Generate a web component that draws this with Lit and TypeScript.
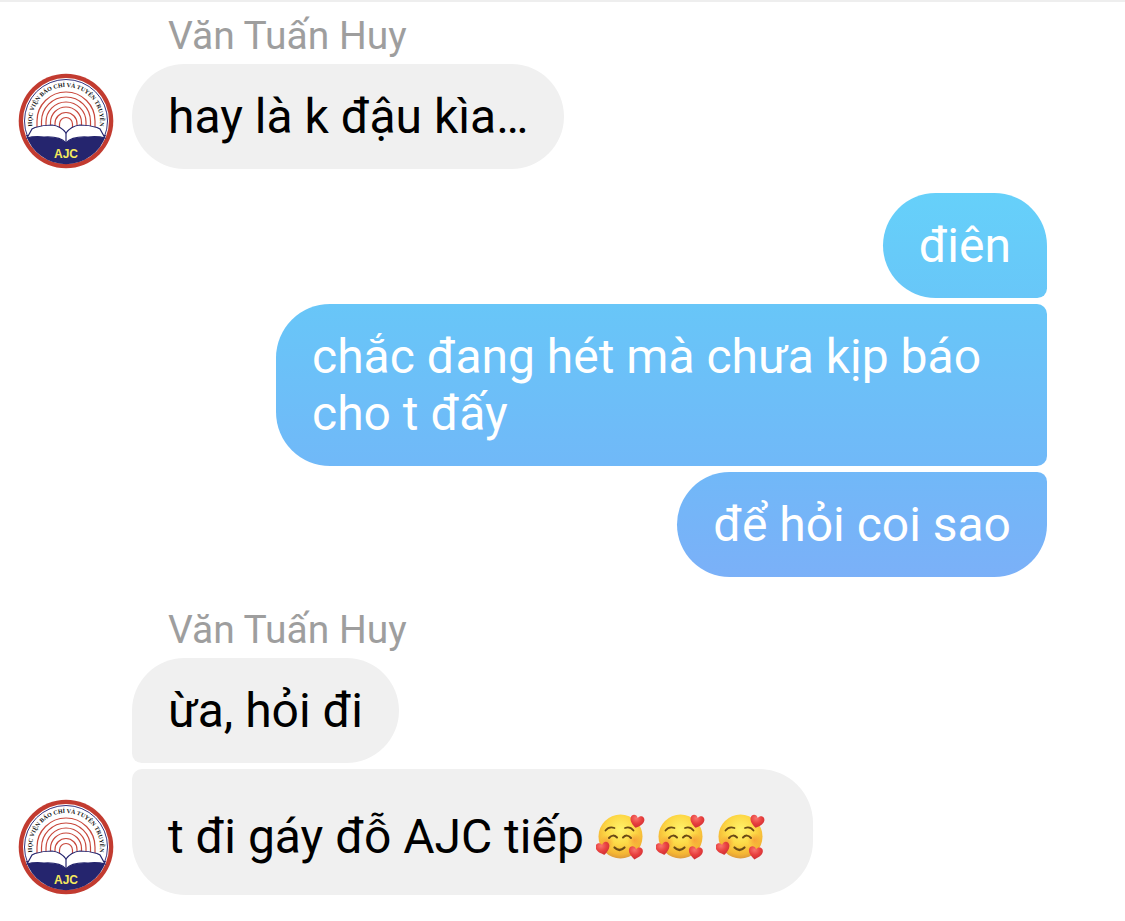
import { LitElement, html, css, svg } from "lit";
import { customElement, property } from "lit/decorators.js";

interface Message {
  text: string;
  hearts?: number;
}

interface MessageGroup {
  sender?: string;
  messages: Message[];
}

/* Sunrise lines behind the book: radius and centre height of each arch. */
const ARCHES: [number, number][] = [
  [29, 48],
  [24.5, 48.5],
  [20, 49],
  [15.5, 49.5],
  [11, 50.5],
  [6.5, 51],
];

@customElement("school-avatar")
class SchoolAvatar extends LitElement {
  static styles = css`
    :host {
      display: block;
      width: 96px;
      height: 96px;
      flex: none;
    }
    .logo {
      display: block;
      width: 100%;
      height: 100%;
    }
    .ring-text {
      font: bold 6px "Liberation Serif", serif;
      fill: #111;
      text-anchor: middle;
    }
    .initials {
      font: bold 12px "Liberation Sans", Arial, sans-serif;
      fill: #f6ea5c;
      text-anchor: middle;
    }
  `;

  render() {
    return html`
      <svg class="logo" viewBox="0 0 96 96" role="img" aria-label="AJC">
        <defs>
          <path id="arc" d="M18 64A34 34 0 1 1 78 64" />
        </defs>
        <circle cx="48" cy="48" r="47.300" fill="#c23b30" />
        <circle cx="48" cy="48" r="43" fill="#fff" />
        <circle cx="48" cy="48" r="41.500" fill="#fff" stroke="#34347e" stroke-width="1" />
        <g fill="none" stroke="#c8483c" stroke-width="1.200">
          ${ARCHES.map(
            ([r, cy]) => svg`<path d="M${48 - r} 62V${cy}A${r} ${r} 0 0 1 ${48 + r} ${cy}V62" />`
          )}
        </g>
        <path d="M8 62H88A42 42 0 0 1 8 62Z" fill="#25256e" />
        <path
          d="M9 65L14 56L17 54.500Q25 52 34 52Q43 53 48 60Q53 53 62 52Q71 52 79 54.500L82 56L87 65Q80 63 70 64Q54 63 48 70Q42 63 26 64Q16 63 9 65Z"
          fill="#fff"
          stroke="#25256e"
          stroke-width="1.200"
        />
        <path d="M48 60V70" stroke="#25256e" stroke-width="1.200" />
        <text class="ring-text">
          <textPath href="#arc" startOffset="50%">HỌC VIỆN BÁO CHÍ VÀ TUYÊN TRUYỀN</textPath>
        </text>
        <text class="initials" x="48" y="85">AJC</text>
      </svg>
    `;
  }
}

@customElement("heart-face")
class HeartFace extends LitElement {
  static styles = css`
    :host {
      display: block;
      width: 50px;
      height: 50px;
    }
    .face {
      display: block;
      width: 100%;
      height: 100%;
    }
  `;

  render() {
    return html`
      <svg class="face" viewBox="0 0 50 50" role="img" aria-label="🥰">
        <defs>
          <radialGradient id="skin" cx="0.5" cy="0.35" r="0.65">
            <stop offset="0" stop-color="#fff36b" />
            <stop offset="0.5" stop-color="#fdd947" />
            <stop offset="0.85" stop-color="#f4b534" />
            <stop offset="1" stop-color="#dd9a3c" />
          </radialGradient>
          <radialGradient id="blush">
            <stop offset="0" stop-color="#f58a33" stop-opacity="0.6" />
            <stop offset="1" stop-color="#f58a33" stop-opacity="0" />
          </radialGradient>
          <radialGradient id="red" cx="0.4" cy="0.25" r="0.8">
            <stop offset="0" stop-color="#f8736d" />
            <stop offset="0.5" stop-color="#e8403f" />
            <stop offset="1" stop-color="#c92b33" />
          </radialGradient>
          <path
            id="heart"
            d="M0 6.5C-3 4.5 -7 1.5 -7 -2.2C-7 -6.8 -1.6 -7.4 0 -3.5C1.6 -7.4 7 -6.8 7 -2.2C7 1.5 3 4.5 0 6.5Z"
            fill="url(#red)"
          />
        </defs>
        <circle cx="24.500" cy="24.500" r="22" fill="url(#skin)" />
        <circle cx="11" cy="30" r="7" fill="url(#blush)" />
        <circle cx="38.500" cy="28" r="7" fill="url(#blush)" />
        <g fill="none" stroke="#6b4a16" stroke-linecap="round">
          <path d="M9.500 18.500Q13 14 18.500 16" stroke-width="1.800" />
          <path d="M29 16Q34 14 37.500 18.500" stroke-width="1.800" />
          <path d="M13 26Q17 21.500 21 25.500" stroke-width="2" />
          <path d="M27 25.500Q31 21.500 35 26" stroke-width="2" />
          <path d="M18.500 35.500Q23.500 40.500 28.500 35.500" stroke-width="2.200" />
        </g>
        <use href="#heart" transform="translate(41 9.500) rotate(12)" />
        <use href="#heart" transform="translate(7 36.500) rotate(-14)" />
        <use href="#heart" transform="translate(39.500 41) rotate(10)" />
      </svg>
    `;
  }
}

@customElement("message-group")
class MessageGroupView extends LitElement {
  @property({ attribute: false }) group: MessageGroup = { messages: [] };

  static styles = css`
    :host {
      display: block;
    }
    .row {
      display: flex;
      align-items: flex-end;
      gap: 18px;
      padding: 0 78px 0 18px;
    }
    .stack {
      display: flex;
      flex-direction: column;
      flex: 1;
      min-width: 0;
      gap: 6px;
      align-items: flex-start;
    }
    .outgoing .stack {
      align-items: flex-end;
    }
    .sender {
      margin: 0 0 0 132px;
      padding: 6px 36px 5px;
      font-size: 39px;
      font-weight: 400;
      line-height: 46px;
      color: #9e9e9e;
    }
    .bubble {
      box-sizing: border-box;
      max-width: 771px;
      margin: 0;
      padding: 24px 36px;
      border-radius: 54px;
      background: #f0f0f0;
      color: #000;
      font-size: 48px;
      line-height: 57px;
      overflow-wrap: anywhere;
    }
    .outgoing .bubble {
      background: linear-gradient(#62e2fd, #68c6f8 33%, #70b9f8 50%, #7bb0f8 63%, #9290f5) fixed;
      color: #fff;
    }
    .incoming .bubble:not(:last-child) {
      border-bottom-left-radius: 10px;
    }
    .incoming .bubble:not(:first-child) {
      border-top-left-radius: 10px;
    }
    .outgoing .bubble:not(:last-child) {
      border-bottom-right-radius: 10px;
    }
    .outgoing .bubble:not(:first-child) {
      border-top-right-radius: 10px;
    }
    .with-hearts {
      display: flex;
      align-items: center;
      gap: 12px;
      padding-block: 39px 30px;
    }
    .hearts {
      display: flex;
      gap: 10px;
      padding-right: 11px;
    }
  `;

  render() {
    const { sender, messages } = this.group;
    return html`
      ${sender ? html`<h2 class="sender">${sender}</h2>` : null}
      <div class="row ${sender ? "incoming" : "outgoing"}">
        ${sender ? html`<school-avatar></school-avatar>` : null}
        <div class="stack">
          ${messages.map((message) =>
            message.hearts
              ? html`<div class="bubble with-hearts">
                  <span>${message.text}</span>
                  <span class="hearts">
                    ${Array.from({ length: message.hearts }, () => html`<heart-face></heart-face>`)}
                  </span>
                </div>`
              : html`<p class="bubble">${message.text}</p>`
          )}
        </div>
      </div>
    `;
  }
}

@customElement("app-root")
class AppRoot extends LitElement {
  static styles = css`
    :host {
      display: block;
      font-family: Roboto, "Noto Sans", sans-serif;
      background: #fff;
    }
    .thread {
      display: flex;
      flex-direction: column;
      gap: 24px;
      min-height: 100vh;
      box-sizing: border-box;
      padding: 5px 0 24px;
      border-top: 2px solid #eee;
    }
  `;

  private groups: MessageGroup[] = [
    { sender: "Văn Tuấn Huy", messages: [{ text: "hay là k đậu kìa…" }] },
    {
      messages: [
        { text: "điên" },
        { text: "chắc đang hét mà chưa kịp báo cho t đấy" },
        { text: "để hỏi coi sao" },
      ],
    },
    {
      sender: "Văn Tuấn Huy",
      messages: [{ text: "ừa, hỏi đi" }, { text: "t đi gáy đỗ AJC tiếp", hearts: 3 }],
    },
  ];

  render() {
    return html`
      <main class="thread">
        ${this.groups.map((group) => html`<message-group .group=${group}></message-group>`)}
      </main>
    `;
  }
}
